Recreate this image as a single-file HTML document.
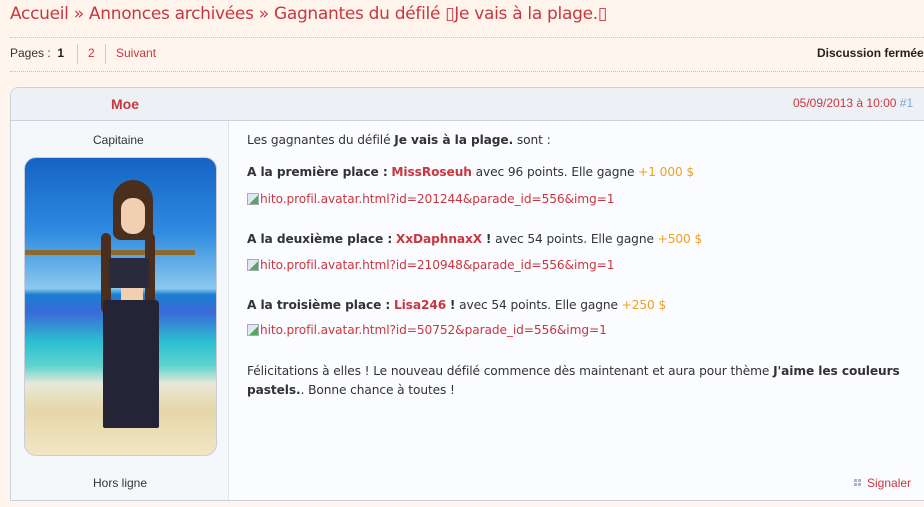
<!DOCTYPE html>
<html><head><meta charset="utf-8"><style>
*{box-sizing:border-box;margin:0;padding:0}
body{width:924px;height:507px;overflow:hidden;background:#fff5ec;font-family:"DejaVu Sans",Verdana,sans-serif;position:relative;color:#333}
.a{position:absolute;white-space:nowrap}
.title{left:10px;top:4px;font-family:"DejaVu Sans",sans-serif;font-size:17px;color:#c9373e;letter-spacing:-0.3px}
.dot{position:absolute;left:10px;right:0;border-top:1px dotted #d9bfa6}
.pg{font-family:"Liberation Sans",Arial,sans-serif;font-size:12px;top:46px}
.box{position:absolute;left:10px;top:87px;width:930px;height:414px;border:1px solid #c9d3de;border-radius:8px 0 0 0;background:#fbfcff;overflow:hidden}
.hdr{position:absolute;left:0;top:0;right:0;height:33px;background:#edf1f5;border-bottom:1px solid #c9d3de}
.left{position:absolute;left:0;top:33px;width:218px;bottom:0;background:#f5f8fb;border-right:1px solid #dde3ea}
.c{font-size:12.2px;color:#333;letter-spacing:-0.1px}
b{color:#333}
.r{color:#c9373e;font-weight:bold}
.o{color:#f0a020}
.l{color:#c9373e}
.av{position:absolute;left:24px;top:157px;width:193px;height:299px;border-radius:12px;border:1px solid #ccd;overflow:hidden;background:linear-gradient(#1563c4 0%,#2f8be0 25%,#8cc8ee 44%,#1a7fd0 46%,#3a6ad8 52%,#2cc0d0 62%,#60d4cf 70%,#e8e8d8 76%,#e6d7a8 85%,#f0e6c4 100%)}
.ic{display:inline-block;width:12px;height:12px;border:1px solid #aab;vertical-align:-2px;margin-right:1px;background:linear-gradient(135deg,#dfe8f5 55%,#5a5 56%)}
</style></head><body>
<div class="a title">Accueil » Annonces archivées » Gagnantes du défilé ▯Je vais à la plage.▯</div>
<div class="dot" style="top:37px"></div>
<div class="a pg" style="left:10px">Pages :&nbsp; <b style="color:#222">1</b></div>
<div class="a" style="left:77px;top:44px;height:20px;border-left:1px solid #e0c8b0"></div>
<div class="a pg l" style="left:88px">2</div>
<div class="a" style="left:105px;top:44px;height:20px;border-left:1px solid #e0c8b0"></div>
<div class="a pg l" style="left:116px">Suivant</div>
<div class="a pg" style="left:817px;font-weight:bold;color:#222">Discussion fermée</div>
<div class="dot" style="top:71px"></div>
<div class="box"><div class="hdr"></div><div class="left"></div></div>
<div class="a" style="left:111px;top:96px;font-family:'Liberation Sans',Arial,sans-serif;font-weight:bold;font-size:14px;color:#c9373e">Moe</div>
<div class="a" style="left:793px;top:96px;font-family:'Liberation Sans',Arial,sans-serif;font-size:12px;color:#c9373e">05/09/2013 à 10:00 <span style="color:#7aa7d8">#1</span></div>
<div class="a" style="left:93px;top:133px;font-family:'Liberation Sans',Arial,sans-serif;font-size:12px;color:#333">Capitaine</div>
<div class="av">
<div style="position:absolute;left:0;top:92px;width:170px;height:5px;background:#8a6a30"></div>
<div style="position:absolute;left:88px;top:22px;width:40px;height:60px;border-radius:20px 20px 8px 8px;background:#4a2e1e"></div>
<div style="position:absolute;left:76px;top:75px;width:10px;height:80px;border-radius:5px;background:#4a2e1e"></div>
<div style="position:absolute;left:120px;top:75px;width:10px;height:80px;border-radius:5px;background:#4a2e1e"></div>
<div style="position:absolute;left:96px;top:40px;width:24px;height:36px;border-radius:11px;background:#f2cfb0"></div>
<div style="position:absolute;left:84px;top:100px;width:40px;height:30px;background:#2a2a3c"></div>
<div style="position:absolute;left:96px;top:130px;width:22px;height:12px;background:#f2cfb0"></div>
<div style="position:absolute;left:78px;top:142px;width:56px;height:128px;background:#242436;border-radius:4px 4px 2px 2px"></div>
</div>
<div class="a" style="left:93px;top:476px;font-family:'Liberation Sans',Arial,sans-serif;font-size:12px;color:#333">Hors ligne</div>
<div class="a c" style="left:247px;top:133px">Les gagnantes du défilé <b>Je vais à la plage.</b> sont :</div>
<div class="a c" style="left:247px;top:165px"><b>A la première place :</b> <span class="r">MissRoseuh</span> avec 96 points. Elle gagne <span class="o">+1 000 $</span></div>
<div class="a c l" style="left:247px;top:192px"><span class="ic"></span>hito.profil.avatar.html?id=201244&amp;parade_id=556&amp;img=1</div>
<div class="a c" style="left:247px;top:232px"><b>A la deuxième place :</b> <span class="r">XxDaphnaxX</span> <b>!</b> avec 54 points. Elle gagne <span class="o">+500 $</span></div>
<div class="a c l" style="left:247px;top:258px"><span class="ic"></span>hito.profil.avatar.html?id=210948&amp;parade_id=556&amp;img=1</div>
<div class="a c" style="left:247px;top:298px"><b>A la troisième place :</b> <span class="r">Lisa246</span> <b>!</b> avec 54 points. Elle gagne <span class="o">+250 $</span></div>
<div class="a c l" style="left:247px;top:323px"><span class="ic"></span>hito.profil.avatar.html?id=50752&amp;parade_id=556&amp;img=1</div>
<div class="a c" style="left:247px;top:364px">Félicitations à elles ! Le nouveau défilé commence dès maintenant et aura pour thème <b>J'aime les couleurs</b></div>
<div class="a c" style="left:247px;top:383px"><b>pastels.</b>. Bonne chance à toutes !</div>
<div class="a" style="left:854px;top:479px;width:7px;height:7px;background:linear-gradient(90deg,#aab5c5 3px,transparent 3px,transparent 4px,#aab5c5 4px)"></div>
<div class="a" style="left:854px;top:482px;width:7px;height:1px;background:#fbfcff"></div>
<div class="a" style="left:867px;top:476px;font-family:'Liberation Sans',Arial,sans-serif;font-size:12px;color:#c9373e">Signaler</div>
</body></html>
